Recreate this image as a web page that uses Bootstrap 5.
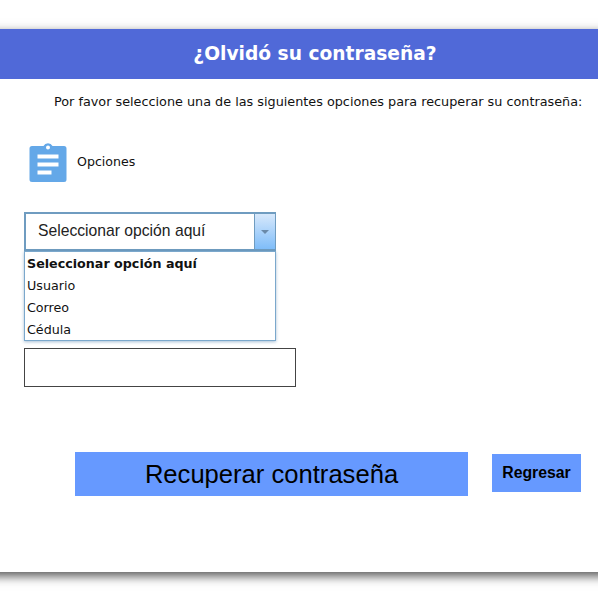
<!DOCTYPE html>
<html lang="es">
<head>
<meta charset="utf-8">
<title>¿Olvidó su contraseña?</title>
<link href="https://cdn.jsdelivr.net/npm/bootstrap@5.3.0/dist/css/bootstrap.min.css" rel="stylesheet">
<style>
html,body{height:100%;overflow:hidden;background:#fff}
body{font-family:"DejaVu Sans",Verdana,sans-serif;color:#111}
.sheet{margin:29px -20px 0;padding:0 20px;height:543px;background:#fff;box-shadow:0 4px 10px rgba(0,0,0,.68)}
.banner{height:50px;margin:0 -20px;background:#5069d8;color:#fff;font-size:18.65px;font-weight:700;padding-left:32px}
.intro{font-size:12.8px;height:58px;padding:13px 0 0 54px;white-space:nowrap}
.optrow{height:50px;padding-left:29px;font-size:12.6px;gap:10px}
.clip{display:block;width:38px;height:42px;flex:none}
.picker{width:252px;margin:25px 0 0 24px}
.picktop{height:39px;border:2px solid #6f9cc0;border-width:2px 1px 2px 2px;font:15.7px "Liberation Sans",Arial,sans-serif;color:#222}
.picktext{padding:0 0 2px 12px}
.pickarrow{width:21px;border-left:1px solid #6f9cc0;background:linear-gradient(#d7e8fb,#7fbdf9)}
.tri{width:0;height:0;border:4px solid transparent;border-top-color:#6a89a8;border-bottom:0}
.picklist{margin-top:0;height:90px;border:1px solid #7ba8cc;box-shadow:0 1px 3px rgba(60,110,160,.45);font-size:12.7px;padding:1px 0 0 2px;list-style:none;margin-bottom:0}
.picklist li{height:22px;line-height:22px}
.entry{display:block;width:272px;height:39px;margin:7px 0 0 24px;border:1px solid #444;border-radius:0;padding:0 6px}
.actions{padding:65px 17px 0 75px}
.mainbtn,.backbtn{border:0;border-radius:0;background:#6699ff;color:#000;font-family:"Liberation Sans",Arial,sans-serif;padding:0}
.mainbtn{width:393px;height:44px;font-size:25.6px}
.backbtn{width:89px;height:38px;font-size:15.8px;font-weight:700;margin-top:2px}
.mainbtn:hover,.backbtn:hover{background:#6699ff;color:#000}
</style>
</head>
<body>
<main class="sheet">
  <h1 class="banner m-0 d-flex align-items-center justify-content-center">¿Olvidó su contraseña?</h1>
  <p class="intro m-0">Por favor seleccione una de las siguientes opciones para recuperar su contraseña:</p>
  <div class="optrow d-flex align-items-center">
    <svg class="clip" viewBox="0 0 38 42" aria-hidden="true">
      <path fill="#64a8e8" fill-rule="evenodd" d="M3 5h11.500a5 5 0 0 1 9 0H35a2.500 2.500 0 0 1 2.500 2.500V38.500A2.500 2.500 0 0 1 35 41H3a2.500 2.500 0 0 1-2.500-2.500V7.500A2.500 2.500 0 0 1 3 5ZM19 4.500a2 2 0 1 0 0 4 2 2 0 0 0 0-4ZM8.500 13.500v4h21v-4ZM8.500 21.500v4h21v-4ZM8.500 29.500v4h14v-4Z"/>
    </svg>
    <span>Opciones</span>
  </div>
  <div class="picker">
    <div class="picktop d-flex align-items-stretch">
      <span class="picktext flex-grow-1 d-flex align-items-center">Seleccionar opción aquí</span>
      <span class="pickarrow d-flex align-items-center justify-content-center"><span class="tri"></span></span>
    </div>
    <ul class="picklist">
      <li class="fw-bold">Seleccionar opción aquí</li>
      <li>Usuario</li>
      <li>Correo</li>
      <li>Cédula</li>
    </ul>
  </div>
  <input class="entry form-control" type="text" aria-label="Valor">
  <div class="actions d-flex justify-content-between align-items-start">
    <button class="mainbtn btn" type="button">Recuperar contraseña</button>
    <button class="backbtn btn" type="button">Regresar</button>
  </div>
</main>
<script src="https://cdn.jsdelivr.net/npm/bootstrap@5.3.0/dist/js/bootstrap.bundle.min.js"></script>
</body>
</html>
